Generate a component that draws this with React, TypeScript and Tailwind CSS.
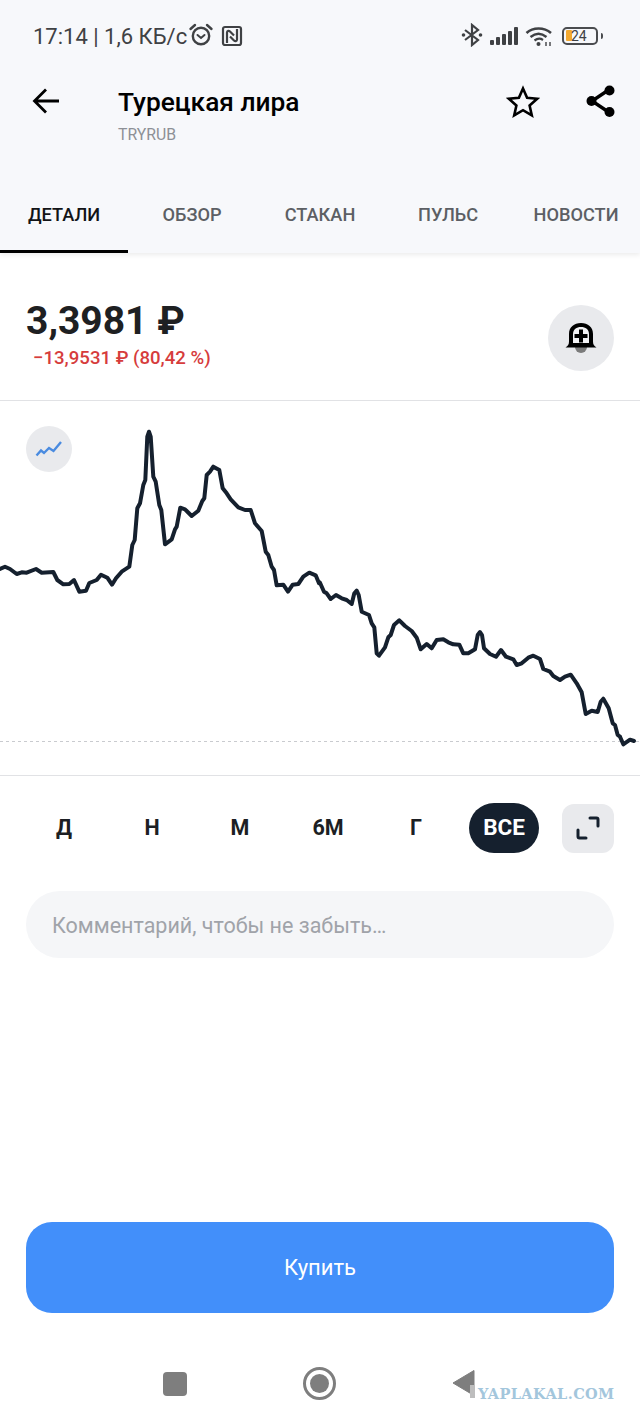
// chart points read off the screenshot, in 3x crop coordinates
const leftPart = [
  [0, 447], [15, 440], [30, 447], [50, 462], [65, 457], [80, 458], [108, 447], [125, 458], [160, 456], [172, 480],
  [190, 493], [208, 492], [222, 480], [238, 515], [258, 512], [268, 489], [290, 480], [303, 464], [322, 473], [336, 494],
  [348, 475], [365, 455], [388, 440], [397, 375], [404, 360], [412, 265], [420, 250], [430, 195], [436, 180], [442, 50],
  [447, 35], [452, 50], [460, 170], [467, 185], [478, 255], [484, 270], [495, 373], [515, 358], [525, 328], [530, 320],
  [541, 263], [555, 268], [575, 288], [595, 272], [607, 243], [613, 235], [620, 165], [630, 155], [640, 140], [658, 150],
  [668, 205], [680, 220], [692, 238], [715, 262], [735, 270], [752, 270], [765, 310], [785, 333], [797, 395], [805, 405],
  [815, 440], [822, 450], [830, 496], [850, 494], [864, 515], [878, 494], [895, 492], [910, 470], [928, 458], [947, 466],
  [957, 490],
];
const rightPart = [
  [0, 68], [12, 95], [20, 100], [32, 117], [48, 105], [65, 115], [80, 120], [95, 132], [103, 100], [110, 92], [116, 105],
  [125, 155], [147, 165], [155, 190], [163, 202], [170, 280], [177, 287], [195, 262], [205, 232], [212, 225], [222, 195],
  [238, 181], [255, 198], [275, 213], [290, 233], [302, 268], [320, 252], [335, 265], [350, 240], [370, 238], [385, 247],
  [400, 253], [418, 254], [430, 280], [445, 280], [465, 268], [473, 225], [480, 216], [486, 225], [492, 265], [510, 282],
  [528, 290], [543, 270], [558, 290], [580, 298], [590, 315], [605, 310], [625, 293], [640, 287], [660, 297], [670, 327],
  [690, 335], [700, 348], [720, 360], [735, 350], [752, 344], [770, 370], [785, 397], [797, 462], [815, 452], [833, 456],
  [842, 425], [850, 416], [866, 445], [878, 490], [885, 495], [893, 525], [900, 530], [910, 553], [930, 539], [942, 543],
];

// the chart box starts at y=401 on the page
const chartPoints = [
  ...leftPart.map(([x, y]) => `${(x / 3).toFixed(1)},${(420 + y / 3 - 401).toFixed(1)}`),
  ...rightPart.map(([x, y]) => `${(320 + x / 3).toFixed(1)},${(560 + y / 3 - 401).toFixed(1)}`),
].join(' ');

const tabs = ['ДЕТАЛИ', 'ОБЗОР', 'СТАКАН', 'ПУЛЬС', 'НОВОСТИ'];
const ranges = ['Д', 'Н', 'М', '6М', 'Г'];

function StatusBar() {
  return (
    <div className="flex h-[72px] items-start justify-between pl-[33px] pr-[37px] pt-[22px]">
      <div className="flex items-center text-[#3f4144]">
        <span className="text-[22px] leading-[30px]">17:14 | 1,6 КБ/с</span>
        <svg width="26" height="26" viewBox="0 0 26 26" fill="none" stroke="#3f4144" className="ml-[1px] -mt-[4px]">
          <circle cx="13" cy="14" r="8.2" strokeWidth="2.4" />
          <path d="M9.5 13l3.5 3 3.5-3" strokeWidth="2" strokeLinecap="round" />
          <path d="M2.5 7l4.5-4M23.5 7l-4.5-4" strokeWidth="2.4" strokeLinecap="round" />
        </svg>
        <svg width="22" height="22" viewBox="0 0 22 22" fill="none" stroke="#3f4144" className="ml-[7px] -mt-[2px]">
          <rect x="2" y="2" width="18" height="18" rx="2" strokeWidth="2.2" />
          <path d="M6 18V7.500c0-2 2-2 3-1l4 4M16 4v10.500c0 2-2 2-3 1l-4-4" strokeWidth="2.2" />
        </svg>
      </div>
      <div className="mt-[2px] flex items-center">
        <svg width="22" height="24" viewBox="0 0 22 24" fill="none" stroke="#3f4144" className="-mt-[1px]">
          <path d="M4 7l13 10-6 5V2l6 5L4 17" strokeWidth="2.2" />
          <circle cx="2.500" cy="12" r="1.800" fill="#3f4144" stroke="none" />
          <circle cx="19.500" cy="12" r="1.800" fill="#3f4144" stroke="none" />
        </svg>
        <svg width="29" height="18" viewBox="0 0 29 18" fill="#3f4144" className="ml-[7px]">
          <rect x="0" y="13" width="4" height="5" rx="1" />
          <rect x="6" y="10" width="4" height="8" rx="1" />
          <rect x="12" y="7" width="4" height="11" rx="1" />
          <rect x="18" y="4" width="4" height="14" rx="1" />
          <rect x="24" y="0" width="4" height="18" rx="1" />
        </svg>
        <svg width="28" height="20" viewBox="0 0 28 20" fill="none" stroke="#3f4144" className="ml-[6px]">
          <path d="M1.500 7C8 1 19 1 26 7" strokeWidth="2.600" />
          <path d="M5.500 11c5-4 11-4 16 0" strokeWidth="2.400" />
          <path d="M9.500 14.500c3-2.200 6-2.200 8.500-.5" strokeWidth="2.200" />
          <circle cx="13.500" cy="18" r="2" fill="#3f4144" stroke="none" />
          <path d="M21 20v-4M25 16v4" strokeWidth="1.400" />
        </svg>
        <div className="ml-[9px] flex h-[18px] w-[36px] items-center rounded-[5px] border-2 border-[#4a4c4f] pl-[2px]">
          <div className="h-[11px] w-[6px] rounded-[1px] bg-[#f4a92f]" />
          <span className="ml-[-1px] text-[14px] leading-none text-[#3f4144]">24</span>
        </div>
        <div className="ml-[3px] h-[6px] w-[2px] rounded-r-sm bg-[#4a4c4f]" />
      </div>
    </div>
  );
}

function Header() {
  return (
    <div className="flex h-[64px] items-start pl-[32px] pr-[24px]">
      <svg width="28" height="26" viewBox="0 0 28 26" fill="none" stroke="#000" strokeWidth="2.800" className="mt-[2px]">
        <path d="M27 13H3M14 1.500L2.500 13 14 24.500" />
      </svg>
      <div className="ml-[58px] flex-1">
        <div className="mt-[1px] text-[26.300px] font-medium leading-[30px] text-black">Турецкая лира</div>
        <div className="mt-[8px] text-[15.800px] leading-[20px] text-[#8d9096]">TRYRUB</div>
      </div>
      <svg width="34" height="34" viewBox="0 0 34 34" fill="none" stroke="#000" strokeWidth="2.600" className="mr-[45px] mt-[-1px]">
        <path d="M17 3.500l4.100 9.300 10.100 1-7.600 6.700 2.200 9.900-8.800-5.200-8.800 5.200 2.200-9.900-7.600-6.700 10.100-1z" />
      </svg>
      <svg width="32" height="34" viewBox="0 0 32 34" className="mt-[-2px] mr-[-1px]" fill="#000">
        <path d="M25 5L7 17l18 12" stroke="#000" strokeWidth="3.400" fill="none" />
        <circle cx="24.500" cy="6.500" r="5" />
        <circle cx="6.500" cy="17" r="5" />
        <circle cx="24.500" cy="28" r="5" />
      </svg>
    </div>
  );
}

export default function App() {
  return (
    <div className="relative flex h-[1423px] w-[640px] flex-col overflow-hidden bg-white font-['Roboto',sans-serif]">
      <div className="relative z-10 h-[253px] bg-[#f7f8fb] shadow-[0_2px_5px_rgba(0,0,0,0.08)]">
        <StatusBar />
        <div className="pt-[14px]">
          <Header />
        </div>
        <div className="mt-[30px] flex h-[73px]">
          {tabs.map((tab, i) => (
            <div
              key={tab}
              className={`flex w-[128px] items-start justify-center pt-[23px] text-[18.200px] font-medium leading-[24px] ${
                i === 0 ? 'border-b-[3px] border-black text-[#121417]' : 'text-[#5c5f64]'
              }`}
            >
              {tab}
            </div>
          ))}
        </div>
      </div>

      <div className="flex h-[148px] items-start justify-between border-b border-[#e1e2e5] pl-[26px] pr-[26px] pt-[43px]">
        <div>
          <div className="text-[39px] font-bold leading-[50px] text-[#1e2022]">3,3981 ₽</div>
          <div className="ml-[7px] mt-[-1px] text-[18.600px] font-medium leading-[26px] text-[#d63c3c]">−13,9531 ₽ (80,42 %)</div>
        </div>
        <div className="mt-[9px] flex h-[66px] w-[66px] items-center justify-center rounded-full bg-[#e9eaed]">
          <svg width="34" height="34" viewBox="0 0 34 34">
            <path d="M11 26a6 6 0 0 0 12 0z" fill="#7b7b7b" />
            <path d="M1.500 26.500c2.500-1.500 3.500-3 3.500-6V13C5 6 10 2 17 2s12 4 12 11v7.500c0 3 1 4.500 3.500 6z" fill="#000" />
            <path d="M9 22V13c0-4.500 3.500-7 8-7s8 2.500 8 7v9z" fill="#f3f3f5" />
            <path d="M15 8.500h4V13h4.500v4H19v4.500h-4V17h-4.500v-4H15z" fill="#000" />
          </svg>
        </div>
      </div>

      <div className="relative h-[375px] border-b border-[#e1e2e5]">
        <svg width="640" height="374" viewBox="0 0 640 374" fill="none" className="block">
          <line x1="0" y1="340.500" x2="640" y2="340.500" stroke="#c9cbcf" strokeWidth="1" strokeDasharray="3 3" />
          <polyline points={chartPoints} stroke="#15202e" strokeWidth="4" strokeLinejoin="round" strokeLinecap="round" />
        </svg>
        <div className="absolute left-[26px] top-[25px] flex h-[46px] w-[46px] items-center justify-center rounded-full bg-[#e9eaed]">
          <svg width="28" height="18" viewBox="0 0 28 18" fill="none">
            <path d="M1.500 15.500L6 10.500l3 2.500 5-5 4.500 3L26 2" stroke="#4a8be0" strokeWidth="2.400" />
          </svg>
        </div>
      </div>

      <div className="flex items-center pl-[20px] pr-[26px] pt-[27px]">
        {ranges.map((range) => (
          <div key={range} className="flex h-[50px] w-[88px] items-center justify-center text-[21.500px] font-bold text-[#1c1f24]">
            {range}
          </div>
        ))}
        <div className="ml-[9px] flex h-[50px] w-[70px] items-center justify-center rounded-full bg-[#15202e] text-[22.500px] font-bold text-white">
          ВСЕ
        </div>
        <div className="ml-auto flex h-[49px] w-[52px] items-center justify-center rounded-[12px] bg-[#e9eaed]">
          <svg width="24" height="24" viewBox="0 0 24 24" fill="none" stroke="#15202e" strokeWidth="3" strokeLinecap="round" strokeLinejoin="round">
            <path d="M14 2h6.500a1.500 1.500 0 0 1 1.500 1.500V10M10 22H3.500A1.500 1.500 0 0 1 2 20.500V14" />
          </svg>
        </div>
      </div>

      <div className="mx-[26px] mt-[38px] flex h-[67px] items-center rounded-[34px] bg-[#f5f6f8] pl-[26px] pt-[3px] text-[21.500px] text-[#a0a3a9]">
        Комментарий, чтобы не забыть…
      </div>

      <div className="flex-1" />

      <div className="mx-[26px] flex h-[91px] items-center justify-center rounded-[26px] bg-[#428ffa] text-[22px] text-white">
        Купить
      </div>

      <div className="relative flex h-[110px] items-start pl-[163px] pt-[59px]">
        <div className="h-[24px] w-[24px] rounded-[4px] bg-[#7e7e7e]" />
        <div className="ml-[116px] mt-[-5px] flex h-[33px] w-[33px] items-center justify-center rounded-full border-[3px] border-[#7e7e7e]">
          <div className="h-[19px] w-[19px] rounded-full bg-[#7e7e7e]" />
        </div>
        <svg width="24" height="28" viewBox="0 0 24 28" className="ml-[116px] mt-[-3px]">
          <path d="M1 14L22 1.500v25z" fill="#7e7e7e" stroke="#7e7e7e" strokeLinejoin="round" />
        </svg>
        <div className="absolute left-[470px] top-[72px] h-[13px] w-[5px] bg-[#bdbdbd]" />
        <div className="absolute left-[478px] top-[71px] font-['DejaVu_Serif',serif] text-[14.500px] font-bold leading-[20px] tracking-[0.400px] text-[#a3c6dc]">
          YAPLAKAL.COM
        </div>
      </div>
    </div>
  );
}
